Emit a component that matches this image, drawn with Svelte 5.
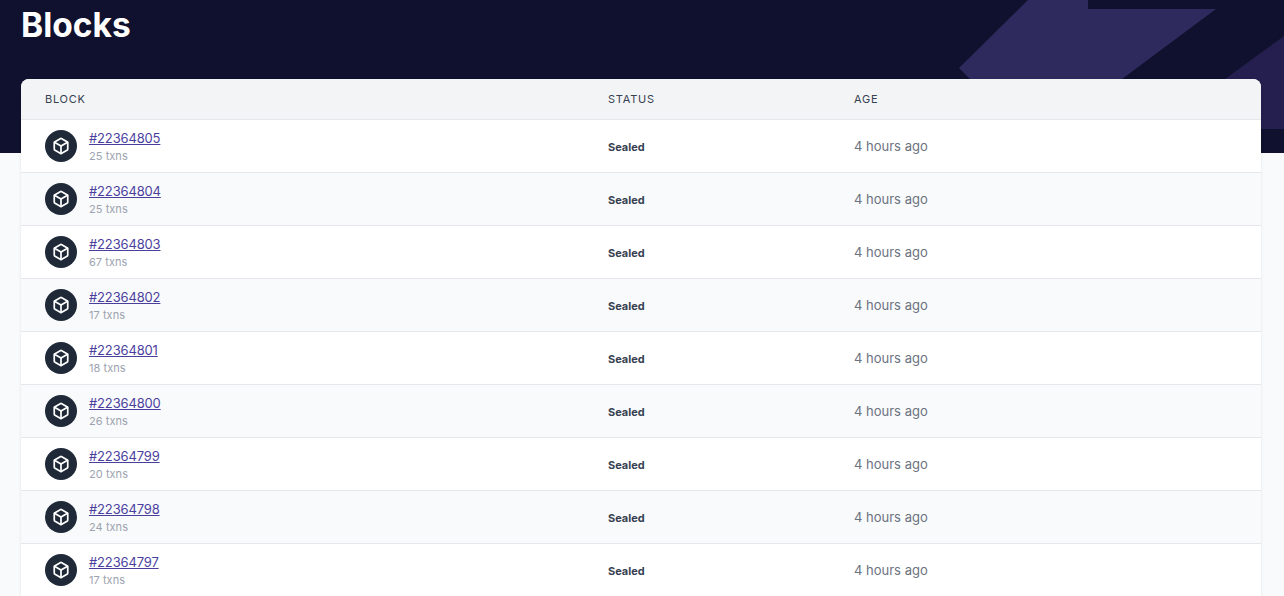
<script>
	const blocks = [
		{ id: 22364805, txns: 25 },
		{ id: 22364804, txns: 25 },
		{ id: 22364803, txns: 67 },
		{ id: 22364802, txns: 17 },
		{ id: 22364801, txns: 18 },
		{ id: 22364800, txns: 26 },
		{ id: 22364799, txns: 20 },
		{ id: 22364798, txns: 24 },
		{ id: 22364797, txns: 17 }
	];
</script>

<div class="page">
	<header class="banner">
		<svg class="shapes" width="1284" height="153" viewBox="0 0 1284 153" aria-hidden="true">
			<path d="M1028 0H1088V9H1216L1122 79H970L959 68Z" fill="#2e2a5e" />
			<path d="M1284 36V129H1200L1225 79Z" fill="#241f4e" />
		</svg>
		<h1>Blocks</h1>
	</header>

	<main class="card">
		<div class="row head">
			<div>BLOCK</div>
			<div>STATUS</div>
			<div>AGE</div>
		</div>
		{#each blocks as block}
			<div class="row">
				<div class="block">
					<span class="icon">
						<svg width="18" height="18" viewBox="0 0 24 24" fill="none" stroke="#fff" stroke-width="2.3" stroke-linecap="round" stroke-linejoin="round">
							<path d="M21 16V8a2 2 0 0 0-1-1.73l-7-4a2 2 0 0 0-2 0l-7 4A2 2 0 0 0 3 8v8a2 2 0 0 0 1 1.73l7 4a2 2 0 0 0 2 0l7-4A2 2 0 0 0 21 16z" />
							<path d="M3.3 7 12 12l8.7-5" />
							<path d="M12 22V12" />
						</svg>
					</span>
					<div class="info">
						<a href="#top">#{block.id}</a>
						<span class="txns">{block.txns} txns</span>
					</div>
				</div>
				<div class="status">Sealed</div>
				<div class="age">4 hours ago</div>
			</div>
		{/each}
	</main>
</div>

<style>
	:global(body) {
		background: #f9fafb;
		font-family: Inter, sans-serif;
		overflow: hidden;
	}

	.banner {
		position: relative;
		height: 153px;
		background: #10112e;
		overflow: hidden;
	}

	.shapes {
		position: absolute;
		top: 0;
		left: 0;
	}

	h1 {
		position: relative;
		margin: 0;
		padding: 5px 0 0 21px;
		font-size: 33.5px;
		line-height: 40px;
		font-weight: 700;
		color: #fff;
	}

	.card {
		position: relative;
		margin: -74px 23px 0 21px;
		background: #fff;
		border-radius: 8px 8px 0 0;
		box-shadow: 0 1px 3px rgba(0, 0, 0, 0.1);
	}

	.row {
		display: grid;
		grid-template-columns: 563px 246px 1fr;
		align-items: center;
		height: 53px;
		box-sizing: border-box;
		padding-left: 24px;
		border-bottom: 1px solid #e5e7eb;
	}

	.row:nth-child(odd) {
		background: #f9fafb;
	}

	.row.head {
		height: 41px;
		background: #f3f4f6;
		border-radius: 8px 8px 0 0;
		font-size: 11px;
		letter-spacing: 0.75px;
		color: #374151;
	}

	.block {
		display: flex;
		align-items: center;
		gap: 12px;
	}

	.icon {
		display: flex;
		align-items: center;
		justify-content: center;
		width: 32px;
		height: 32px;
		border-radius: 50%;
		background: #1f2937;
	}

	.info {
		display: flex;
		flex-direction: column;
		gap: 2px;
	}

	a {
		font-size: 13px;
		line-height: 18px;
		letter-spacing: -0.15px;
		color: #4b3f9e;
	}

	.txns {
		font-size: 11px;
		line-height: 15px;
		letter-spacing: 0.05px;
		color: #9ca3af;
	}

	.status {
		padding-top: 1px;
		font-size: 11px;
		font-weight: 700;
		color: #374151;
	}

	.age {
		font-size: 13px;
		color: #6b7280;
	}
</style>
